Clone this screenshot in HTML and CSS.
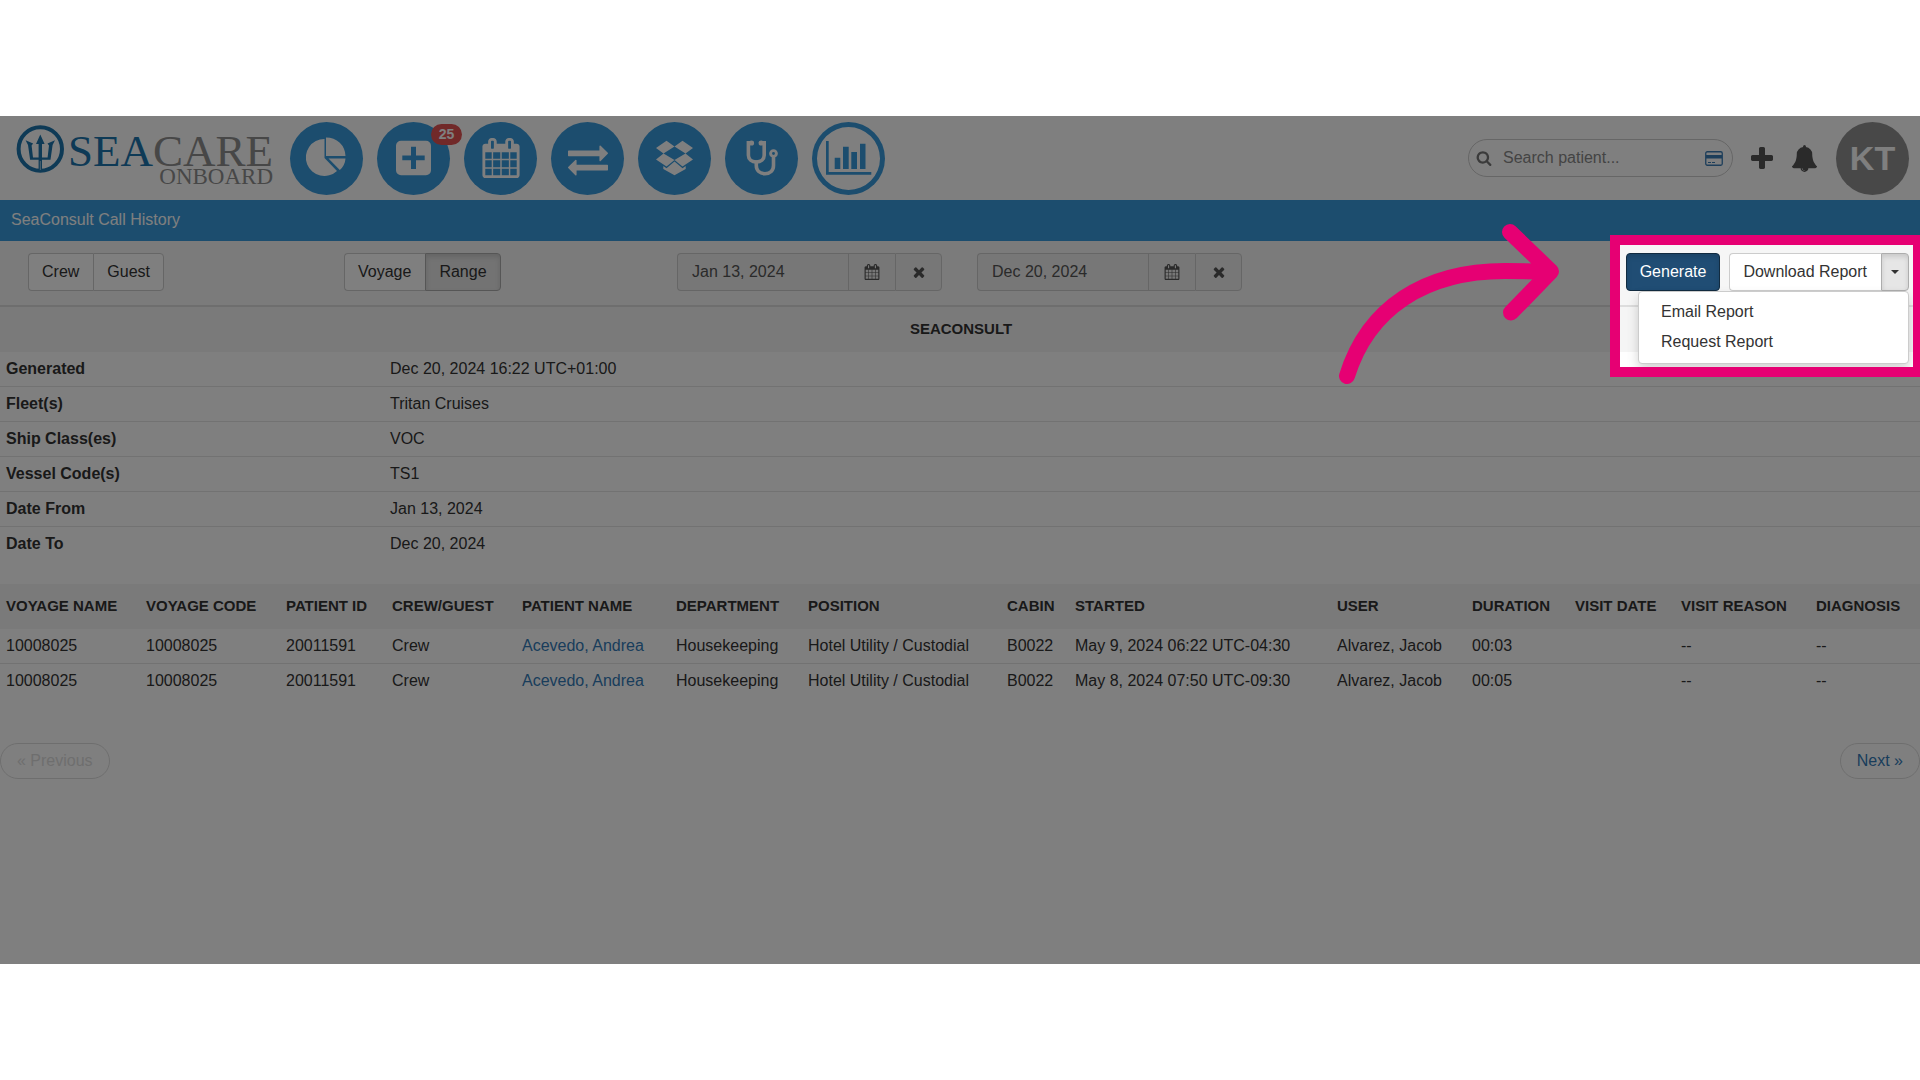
FILE: index.html
```html
<!DOCTYPE html>
<html lang="en">
<head>
<meta charset="utf-8">
<title>SeaConsult Call History</title>
<link rel="stylesheet" href="styles.css">
</head>
<body>
<svg class="defs" aria-hidden="true">
  <symbol id="i-calendar" viewBox="0 0 1792 1792"><path d="M192 1664h288v-288h-288v288zm352 0h320v-288h-320v288zm-352-352h288v-320h-288v320zm352 0h320v-320h-320v320zm-352-384h288v-288h-288v288zm736 736h320v-288h-320v288zm-384-736h320v-288h-320v288zm768 736h288v-288h-288v288zm-384-352h320v-320h-320v320zm-352-864v-288q0-13-9.5-22.5t-22.5-9.5h-64q-13 0-22.5 9.5t-9.5 22.5v288q0 13 9.5 22.5t22.5 9.5h64q13 0 22.5-9.5t9.5-22.5zm736 864h288v-320h-288v320zm-384-384h320v-288h-320v288zm384 0h288v-288h-288v288zm32-480v-288q0-13-9.5-22.5t-22.5-9.5h-64q-13 0-22.5 9.5t-9.5 22.5v288q0 13 9.5 22.5t22.5 9.5h64q13 0 22.5-9.5t9.5-22.5zm384-64v1280q0 52-38 90t-90 38h-1408q-52 0-90-38t-38-90v-1280q0-52 38-90t90-38h128v-96q0-66 47-113t113-47h64q66 0 113 47t47 113v96h384v-96q0-66 47-113t113-47h64q66 0 113 47t47 113v96h128q52 0 90 38t38 90z"/></symbol>
  <symbol id="i-times" viewBox="0 0 1792 1792"><path d="M1490 1322q0 40-28 68l-136 136q-28 28-68 28t-68-28l-294-294-294 294q-28 28-68 28t-68-28l-136-136q-28-28-28-68t28-68l294-294-294-294q-28-28-28-68t28-68l136-136q28-28 68-28t68 28l294 294 294-294q28-28 68-28t68 28l136 136q28 28 28 68t-28 68l-294 294 294 294q28 28 28 68z"/></symbol>
</svg>
<div class="app">
  <header class="header">
    <a class="logo" href="#" aria-label="SeaCare Onboard">
      <svg class="logo-mark" viewBox="0 0 48 48">
        <circle cx="24.300" cy="24" r="21.700" fill="none" stroke="currentColor" stroke-width="4"/>
        <path d="M24.300 9.500L28.600 19H26V32.600H31.600L33 20.500L31.500 18.600L39 15.300L36.600 20L34.500 34.800H26V46H22.600V34.800H14.100L12 20L9.600 15.300L17.100 18.600L15.600 20.500L17 32.600H22.600V19H20z" fill="currentColor"/>
        <path d="M24.300 36v9" stroke="#fff" stroke-width=".6"/>
      </svg>
      <span class="wordmark"><span class="word-main">SEA<span class="word-grey">CARE</span></span><span class="word-sub">ONBOARD</span></span>
    </a>
    <nav class="nav">
      <a class="nav-item" href="#" aria-label="Dashboard"><svg viewBox="0 0 73 73"><path d="M34.5 17V36L47 49A18.5 18.5 0 1 1 34.5 17zM36 15.5A19.3 18.5 0 0 1 55.5 34H36zM38.5 36.5H55.5Q55 43.500 49.800 48z"/></svg></a>
      <a class="nav-item" href="#" aria-label="Visits"><svg viewBox="0 0 73 73"><path fill-rule="evenodd" d="M24 18.700h25a5 5 0 0 1 5 5v24.500a5 5 0 0 1-5 5h-25a5 5 0 0 1-5-5v-24.500a5 5 0 0 1 5-5zM34 24.700v8.700h-8.700v4.800h8.700v8.700h5v-8.700h8.700v-4.800h-8.700v-8.700z"/></svg><span class="badge">25</span></a>
      <a class="nav-item" href="#" aria-label="Calendar"><svg viewBox="0 0 73 73"><use href="#i-calendar" x="17" y="16" width="40" height="40"/></svg></a>
      <a class="nav-item" href="#" aria-label="Transfers"><svg viewBox="0 0 73 73"><svg x="17" y="17" width="40" height="40" viewBox="0 0 1792 1792"><path d="M1792 1184v192q0 13-9.500 22.500t-22.500 9.500h-1376v192q0 13-9.500 22.500t-22.500 9.500q-12 0-24-10l-319-320q-9-9-9-22 0-14 9-23l320-320q9-9 23-9 13 0 22.500 9.500t9.500 22.500v192h1376q13 0 22.500 9.500t9.500 22.500zm0-544q0 14-9 23l-320 320q-9 9-23 9-13 0-22.500-9.500t-9.500-22.500v-192h-1376q-13 0-22.500-9.500t-9.500-22.500v-192q0-13 9.500-22.500t22.500-9.500h1376v-192q0-14 9-23t23-9q12 0 24 10l319 319q9 9 9 23z"/></svg></svg></a>
      <a class="nav-item" href="#" aria-label="Inventory"><svg viewBox="0 0 73 73"><path d="M28.500 18.700L18 26l7.500 5.500 11-7zM44.500 18.700L55 26l-7.500 5.500-11-7zM25.500 31.500L18 37.500l10.500 7 8-6.500zM47.500 31.500L55 37.500l-10.500 7-8-6.500zM36.500 39.500l-8 6.700-3.200-2.100v2.800l11.200 6.300 11.200-6.300v-2.800l-3.200 2.100z"/></svg></a>
      <a class="nav-item" href="#" aria-label="Consults"><svg viewBox="0 0 73 73"><g fill="none" stroke="currentColor" stroke-width="3.600" stroke-linecap="round"><path d="M27 20.800h-3.600v12.500c0 4 3.400 6.700 7.900 6.700s7.900-2.700 7.900-6.700V20.800h-3.600"/><path d="M31.300 40v3.500c0 5 3.600 8.200 8.700 8.200s8.500-3.200 8.500-8.200V36"/><circle cx="48.500" cy="31.500" r="2.900" stroke-width="2.900"/></g><circle cx="26.500" cy="21" r="2.600"/><circle cx="36.200" cy="21" r="2.600"/></svg></a>
      <a class="nav-item nav-item-active" href="#" aria-label="Reports"><svg viewBox="0 0 73 73"><path d="M14 19h2.700v31H59.300v2.700H14zM22.700 35.700h5.600V47h-5.600zM31 24.700h5.700V47H31zM39.300 30H45v17h-5.700zM48 21.700h5.500V47H48z"/></svg></a>
    </nav>
    <div class="tools">
      <label class="search">
        <svg class="search-icon" viewBox="0 0 1792 1792"><path d="M1216 832q0-185-131.500-316.500t-316.500-131.500-316.500 131.500-131.500 316.500 131.500 316.500 316.500 131.500 316.500-131.500 131.500-316.500zm512 832q0 52-38 90t-90 38q-54 0-90-38l-343-342q-179 124-399 124-143 0-273.500-55.500t-225-150-150-225-55.500-273.500 55.500-273.500 150-225 225-150 273.500-55.500 273.500 55.500 225 150 150 225 55.500 273.500q0 220-124 399l343 343q37 37 37 90z"/></svg>
        <input class="search-input" type="text" placeholder="Search patient..." aria-label="Search patient">
        <svg class="card-icon" viewBox="0 0 18 15"><rect x=".75" y=".75" width="16.500" height="13.500" rx="1.500" fill="none" stroke="currentColor" stroke-width="1.300"/><path d="M1 4h16v3.500H1zM3 11h3v1H3zM7 11h3v1H7z"/></svg>
      </label>
      <button class="tool" type="button" aria-label="Add"><svg class="icon-plus" viewBox="192 128 1408 1408"><path d="M1600 736v192q0 40-28 68t-68 28h-416v416q0 40-28 68t-68 28h-192q-40 0-68-28t-28-68v-416h-416q-40 0-68-28t-28-68v-192q0-40 28-68t68-28h416v-416q0-40 28-68t68-28h192q40 0 68 28t28 68v416h416q40 0 68 28t28 68z"/></svg></button>
      <button class="tool" type="button" aria-label="Notifications"><svg class="icon-bell" viewBox="0 0 1792 1792"><path d="M912 1696q0-16-16-16-59 0-101.500-42.500t-42.500-101.500q0-16-16-16t-16 16q0 73 51.500 124.500t124.500 51.500q16 0 16-16zm816-288q0 52-38 90t-90 38h-448q0 106-75 181t-181 75-181-75-75-181h-448q-52 0-90-38t-38-90q50-42 91-88t85-119.500 74.500-158.500 50-206 19.500-260q0-152 117-282.500t307-158.500q-8-19-8-39 0-40 28-68t68-28 68 28 28 68q0 20-8 39 190 28 307 158.500t117 282.500q0 139 19.500 260t50 206 74.500 158.500 85 119.500 91 88z"/></svg></button>
      <button class="avatar" type="button">KT</button>
    </div>
  </header>
  <h1 class="title">SeaConsult Call History</h1>
  <div class="toolbar">
    <div class="group"><button class="btn" type="button">Crew</button><button class="btn" type="button">Guest</button></div>
    <div class="group"><button class="btn" type="button">Voyage</button><button class="btn btn-pressed" type="button">Range</button></div>
    <div class="group date">
      <input class="date-input" type="text" value="Jan 13, 2024" aria-label="Date from">
      <button class="addon" type="button" aria-label="Pick start date"><svg><use href="#i-calendar"/></svg></button>
      <button class="addon" type="button" aria-label="Clear start date"><svg><use href="#i-times"/></svg></button>
    </div>
    <div class="group date">
      <input class="date-input" type="text" value="Dec 20, 2024" aria-label="Date to">
      <button class="addon" type="button" aria-label="Pick end date"><svg><use href="#i-calendar"/></svg></button>
      <button class="addon" type="button" aria-label="Clear end date"><svg><use href="#i-times"/></svg></button>
    </div>
    <div class="actions">
      <button class="btn btn-primary" type="button">Generate</button>
      <div class="group"><button class="btn" type="button">Download Report</button><button class="btn btn-pressed btn-caret" type="button" aria-label="More report options"><span class="caret"></span></button></div>
      <div class="menu"><a class="menu-item" href="#">Email Report</a><a class="menu-item" href="#">Request Report</a></div>
      <div class="spotlight"></div>
    </div>
  </div>
  <table class="info">
    <colgroup><col class="c-label"><col></colgroup>
    <thead><tr><th colspan="2">SEACONSULT</th></tr></thead>
    <tbody>
      <tr><th scope="row">Generated</th><td>Dec 20, 2024 16:22 UTC+01:00</td></tr>
      <tr><th scope="row">Fleet(s)</th><td>Tritan Cruises</td></tr>
      <tr><th scope="row">Ship Class(es)</th><td>VOC</td></tr>
      <tr><th scope="row">Vessel Code(s)</th><td>TS1</td></tr>
      <tr><th scope="row">Date From</th><td>Jan 13, 2024</td></tr>
      <tr><th scope="row">Date To</th><td>Dec 20, 2024</td></tr>
    </tbody>
  </table>
  <table class="calls">
    <colgroup><col class="c-voyage"><col class="c-voyage"><col class="c-id"><col class="c-type"><col class="c-patient"><col class="c-dept"><col class="c-position"><col class="c-cabin"><col class="c-started"><col class="c-user"><col class="c-duration"><col class="c-date"><col class="c-reason"><col></colgroup>
    <thead><tr><th>VOYAGE NAME</th><th>VOYAGE CODE</th><th>PATIENT ID</th><th>CREW/GUEST</th><th>PATIENT NAME</th><th>DEPARTMENT</th><th>POSITION</th><th>CABIN</th><th>STARTED</th><th>USER</th><th>DURATION</th><th>VISIT DATE</th><th>VISIT REASON</th><th>DIAGNOSIS</th></tr></thead>
    <tbody>
      <tr><td>10008025</td><td>10008025</td><td>20011591</td><td>Crew</td><td><a href="#">Acevedo, Andrea</a></td><td>Housekeeping</td><td>Hotel Utility / Custodial</td><td>B0022</td><td>May 9, 2024 06:22 UTC-04:30</td><td>Alvarez, Jacob</td><td>00:03</td><td></td><td>--</td><td>--</td></tr>
      <tr><td>10008025</td><td>10008025</td><td>20011591</td><td>Crew</td><td><a href="#">Acevedo, Andrea</a></td><td>Housekeeping</td><td>Hotel Utility / Custodial</td><td>B0022</td><td>May 8, 2024 07:50 UTC-09:30</td><td>Alvarez, Jacob</td><td>00:05</td><td></td><td>--</td><td>--</td></tr>
    </tbody>
  </table>
  <div class="pager"><button class="page" type="button" disabled>« Previous</button><a class="page" href="#">Next »</a></div>
  <svg class="arrow" viewBox="0 0 222 164" aria-hidden="true"><path d="M9 154C30 86 87 49 167 49Q190 49 211 50M172 10L213 49.500L173 90.500"/></svg>
</div>
</body>
</html>
```
FILE: styles.css
```css
* { box-sizing: border-box; }
body {
  margin: 0;
  padding: 116px 0;
  background: #fff;
  color: #333;
  font: 16px/22px "Liberation Sans", Arial, sans-serif;
}
button, input { font: inherit; color: inherit; }
button { cursor: pointer; }
svg { display: block; fill: currentColor; }
a { color: #337ab7; text-decoration: none; }
.defs { position: absolute; width: 0; height: 0; }
.app {
  position: relative;
  overflow: hidden;
  min-height: calc(100vh - 232px);
  background: #fff;
}

/* Header */
.header {
  display: flex;
  align-items: center;
  height: 84px;
  padding: 0 11px 0 16px;
}
.logo { display: flex; align-items: flex-start; justify-content: space-between; height: 66px; width: 257px; margin-right: 17px; color: #1c75ad; }
.logo-mark { width: 48px; height: 48px; flex: none; }
.wordmark { display: flex; flex-direction: column; align-items: flex-end; padding-top: 7px; font-family: "Liberation Serif", serif; }
.word-main { font-size: 45px; line-height: 38px; }
.word-grey { color: #8f8f8f; }
.word-sub { font-size: 23px; line-height: 14px; color: #8f8f8f; }
.nav { display: flex; gap: 14px; }
.nav-item {
  position: relative;
  width: 73px;
  height: 73px;
  border-radius: 50%;
  background: #389bdd;
  color: #fff;
}
.nav-item-active { background: #fff; color: #389bdd; box-shadow: inset 0 0 0 5px #389bdd; }
.badge {
  position: absolute;
  top: 2px;
  left: 54px;
  min-width: 31px;
  border-radius: 11px;
  background: #e25252;
  font-size: 14px;
  font-weight: bold;
  line-height: 21px;
  text-align: center;
}
.tools { display: flex; align-items: center; gap: 18px; margin-left: auto; }
.search {
  display: flex;
  align-items: center;
  width: 265px;
  height: 38px;
  padding: 0 9px 0 7px;
  border: 1px solid #ccc;
  border-radius: 19px;
  color: #777;
}
.search-icon { width: 16px; height: 16px; margin-right: 11px; }
.search-input { flex: 1; min-width: 0; padding: 0; border: 0; outline: 0; background: none; }
.search-input::placeholder { color: #888; opacity: 1; }
.card-icon { width: 18px; height: 15px; color: #3a7cb5; }
.tool { padding: 0; border: 0; background: none; color: #555; }
.icon-plus { width: 22px; height: 22px; }
.icon-bell { width: 27px; height: 27px; }
.avatar {
  width: 73px;
  height: 73px;
  padding: 0;
  border: 0;
  border-radius: 50%;
  background: #919191;
  color: #fff;
  font-size: 34px;
  font-weight: bold;
}
.title {
  margin: 0;
  padding: 9px 11px 10px;
  background: #389bdd;
  color: #fff;
  font-size: 16px;
  font-weight: normal;
}

/* Filter bar */
.toolbar {
  display: grid;
  grid-template-columns: 316px 333px 300px 1fr auto;
  height: 66px;
  padding: 12px 11px 0 28px;
  border-bottom: 2px solid #ddd;
  background: #f6f6f6;
}
.group { display: flex; height: 38px; }
.btn {
  height: 38px;
  padding: 0 13px;
  border: 1px solid #ccc;
  border-radius: 4px;
  background: #fff;
}
.group > :not(:first-child) { border-top-left-radius: 0; border-bottom-left-radius: 0; }
.group > :not(:last-child) { border-right-width: 0; padding-right: 14px; border-top-right-radius: 0; border-bottom-right-radius: 0; }
.btn-pressed { border-color: #adadad; background: #e6e6e6; box-shadow: inset 0 3px 5px rgba(0, 0, 0, .125); }
.btn-primary { border-color: #122b40; background: #204d74; color: #fff; box-shadow: inset 0 3px 5px rgba(0, 0, 0, .125); }
.date-input {
  width: 171px;
  padding: 0 14px;
  border: 1px solid #ccc;
  border-radius: 4px;
  background: #eee;
  color: #555;
}
.group > .addon {
  display: grid;
  place-items: center;
  width: 47px;
  padding: 0;
  border: 1px solid #ccc;
  border-right-width: 0;
  background: #eee;
  color: #555;
}
.group > .addon:last-child { border-right-width: 1px; border-radius: 0 4px 4px 0; }
.addon svg { width: 16px; height: 16px; }
.actions { position: relative; display: flex; gap: 9px; height: 38px; }
.btn-caret { width: 28px; padding: 0; }
.caret { display: block; width: 8px; margin: 0 auto; border: 4px solid transparent; border-top-color: #333; border-bottom: 0; }
.menu {
  position: absolute;
  top: 38px;
  right: 0;
  width: 271px;
  padding: 5px 0 6px;
  border: 1px solid #ccc;
  border-radius: 4px;
  background: #fff;
  box-shadow: 0 6px 12px rgba(0, 0, 0, .175);
}
.menu-item { display: block; padding: 4px 22px; color: #333; }
.spotlight {
  position: absolute;
  inset: -18px -14px -86px -16px;
  border: 10px solid #e60073;
  box-shadow: 0 0 0 9999px rgba(0, 0, 0, .5);
  pointer-events: none;
}

/* Tables */
table { width: 100%; border-collapse: separate; border-spacing: 0; table-layout: fixed; }
th, td { padding: 6px; text-align: left; white-space: nowrap; }
thead th { height: 45px; padding: 5px 6px 7px; background: #f5f5f5; font-size: 15px; }
.info thead th { padding-left: 8px; text-align: center; }
tbody td, tbody th { height: 35px; border-bottom: 1px solid #e4e4e4; }
tbody tr:last-child > * { padding-bottom: 7px; border-bottom: 0; }
.info { margin-bottom: 22px; }
.c-label { width: 20%; }
.c-voyage { width: 140px; }
.c-id { width: 106px; }
.c-type { width: 130px; }
.c-patient { width: 154px; }
.c-dept { width: 132px; }
.c-position { width: 199px; }
.c-cabin { width: 68px; }
.c-started { width: 262px; }
.c-user { width: 135px; }
.c-duration { width: 103px; }
.c-date { width: 106px; }
.c-reason { width: 135px; }
.pager { display: flex; justify-content: space-between; margin-top: 44px; }
.page { height: 36px; padding: 0 16px; border: 1px solid #ddd; border-radius: 18px; background: #fff; line-height: 34px; }
.page:disabled { color: #ddd; }

.arrow {
  position: absolute;
  top: 106px;
  right: 360px;
  width: 222px;
  height: 164px;
  fill: none;
  stroke: #e60073;
  stroke-width: 16;
  stroke-linecap: round;
  stroke-linejoin: round;
  pointer-events: none;
}
```
